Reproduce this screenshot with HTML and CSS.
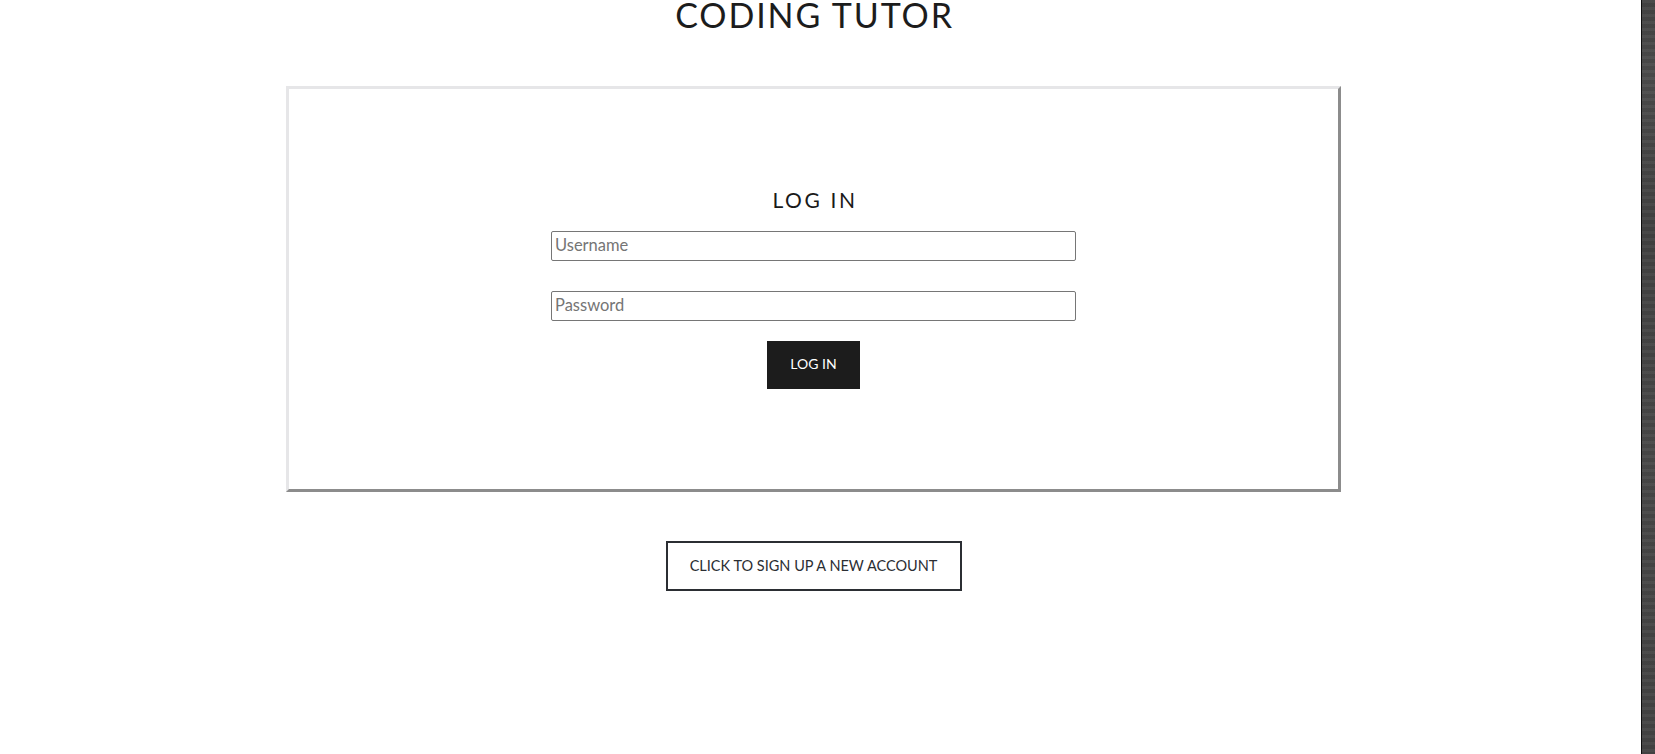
FILE: index.html
```html
<!DOCTYPE html>
<html lang="en">
<head>
<meta charset="utf-8">
<title>Coding Tutor</title>
<link rel="stylesheet" href="styles.css">
</head>
<body>
<div class="page">
  <main class="main">
    <h1 class="site-title">CODING TUTOR</h1>
    <section class="login-card">
      <h2 class="login-title">LOG IN</h2>
      <form class="login-form">
        <input class="field" type="text" placeholder="Username">
        <input class="field field-password" type="password" placeholder="Password">
        <button class="btn-login" type="button">LOG IN</button>
      </form>
    </section>
    <a class="btn-signup" href="#">CLICK TO SIGN UP A NEW ACCOUNT</a>
  </main>
  <div class="edge"></div>
</div>
</body>
</html>
```

FILE: styles.css
```css
html, body {
  margin: 0;
  padding: 0;
  height: 100%;
}

body {
  font-family: Lato, "Noto Sans", sans-serif;
  background: #ffffff;
  overflow: hidden;
}

.page {
  display: flex;
  height: 754px;
}

.main {
  flex: 1;
  padding-right: 14px;
  display: flex;
  flex-direction: column;
  align-items: center;
  background: #ffffff;
}

.edge {
  width: 13px;
  border-left: 1px solid #0d0d0d;
  background:
    repeating-linear-gradient(180deg, rgba(255,255,255,0.03) 0 3px, rgba(0,0,0,0.05) 3px 7px),
    linear-gradient(180deg, #454545 0%, #4d4d4d 10%, #424242 30%, #494949 60%, #444444 100%);
}

.site-title {
  margin: 0;
  font-size: 34px;
  line-height: 30px;
  font-weight: 400;
  letter-spacing: 1.9px;
  padding-left: 2px;
  color: #1c1c1c;
}

.login-card {
  margin-top: 56px;
  width: 1049px;
  border-style: solid;
  border-width: 3px;
  border-color: #e6e6e8 #8c8c8c #8c8c8c #e6e6e8;
  padding: 99px 0 100px;
  display: flex;
  flex-direction: column;
  align-items: center;
}

.login-title {
  margin: 0;
  font-size: 21px;
  line-height: 24px;
  font-weight: 400;
  letter-spacing: 2.6px;
  padding-left: 3px;
  color: #1a1a1a;
}

.login-form {
  margin-top: 19px;
  display: flex;
  flex-direction: column;
  align-items: center;
}

.field {
  box-sizing: border-box;
  width: 525px;
  height: 30px;
  border: 1px solid #767676;
  border-radius: 2px;
  padding: 0 3px 3px;
  font-family: Lato, "Noto Sans", sans-serif;
  font-size: 16.5px;
  color: #222;
  background: #fff;
}

.field::placeholder {
  color: #757575;
}

.field-password {
  margin-top: 30px;
}

.btn-login {
  margin-top: 20px;
  width: 93px;
  height: 48px;
  border: none;
  padding: 0 0 3px;
  background: #1c1c1c;
  color: #ffffff;
  font-family: Lato, "Noto Sans", sans-serif;
  font-size: 14px;
  cursor: pointer;
}

.btn-signup {
  margin-top: 49px;
  box-sizing: border-box;
  width: 296px;
  height: 50px;
  border: 2px solid #2b2e33;
  padding-bottom: 2px;
  display: flex;
  align-items: center;
  justify-content: center;
  font-size: 14.5px;
  color: #2b2e33;
  text-decoration: none;
}
```
